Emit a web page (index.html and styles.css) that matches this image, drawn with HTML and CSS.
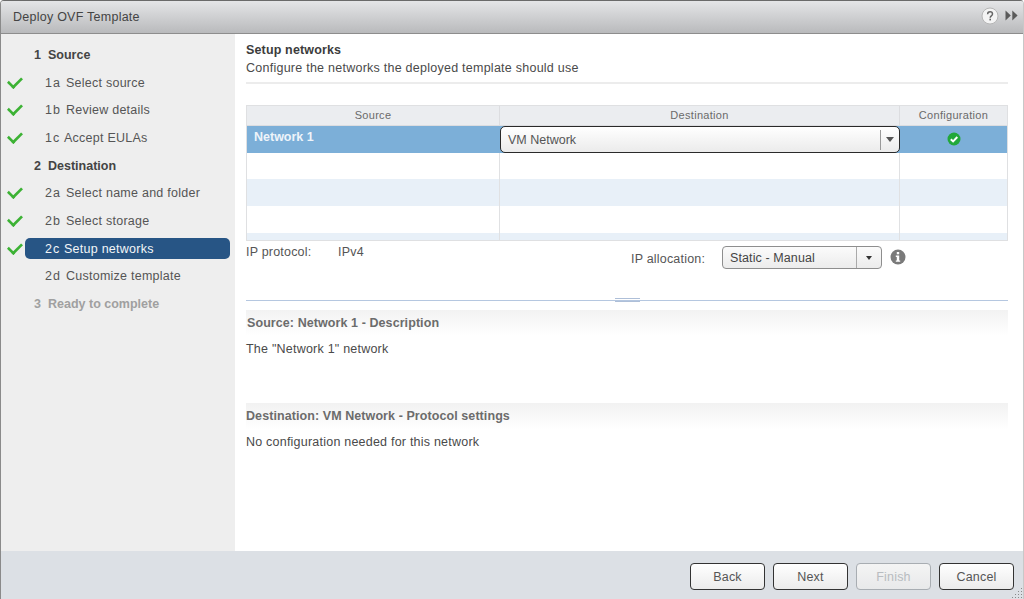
FILE: index.html
```html
<!DOCTYPE html>
<html lang="en">
<head>
<meta charset="utf-8">
<title>Deploy OVF Template</title>
<link rel="stylesheet" href="styles.css">
</head>
<body>
<div class="dialog">
  <header class="titlebar">
    <span class="title">Deploy OVF Template</span>
    <span class="title-icons">
      <svg class="help" width="18" height="18" viewBox="0 0 18 18"><circle cx="9" cy="9" r="8" fill="#f4f4f4" stroke="#b5b5b5"/><path d="M6.6 7.2c0-1.500 1.100-2.400 2.500-2.400s2.400.9 2.400 2.200c0 1.900-2.300 1.900-2.300 3.700" fill="none" stroke="#666" stroke-width="1.500"/><rect x="8.400" y="11.700" width="1.600" height="1.700" fill="#666"/></svg>
      <svg class="more" width="13" height="11" viewBox="0 0 13 11"><path d="M0.500 0.500L5.800 5.500L0.500 10.500ZM7.300 0.500L12.600 5.500L7.300 10.500Z" fill="#5a5a5a"/></svg>
    </span>
  </header>
  <div class="content">
    <nav class="steps">
      <div class="step head"><span class="num">1</span>Source</div>
      <div class="step sub done"><span class="num">1a</span>Select source</div>
      <div class="step sub done"><span class="num">1b</span>Review details</div>
      <div class="step sub done"><span class="num tight">1c</span>Accept EULAs</div>
      <div class="step head"><span class="num">2</span>Destination</div>
      <div class="step sub done"><span class="num">2a</span>Select name and folder</div>
      <div class="step sub done"><span class="num">2b</span>Select storage</div>
      <div class="step sub done current"><span class="pill"><span class="num">2c</span>Setup networks</span></div>
      <div class="step sub"><span class="num">2d</span>Customize template</div>
      <div class="step head muted"><span class="num">3</span>Ready to complete</div>
    </nav>
    <main class="main">
      <h1 class="page-title">Setup networks</h1>
      <p class="page-sub">Configure the networks the deployed template should use</p>
      <div class="rule"></div>
      <div class="table">
        <div class="th">Source</div><div class="th">Destination</div><div class="th">Configuration</div>
        <div class="td sel name">Network 1</div>
        <div class="td sel"><div class="combo"><span class="combo-text">VM Network</span><span class="combo-btn"><i class="arrow"></i></span></div></div>
        <div class="td sel ok"><svg width="14" height="14" viewBox="0 0 14 14"><circle cx="7" cy="7" r="6.500" fill="#22a83a"/><path d="M3.800 7.200L6.100 9.400L10.300 5" fill="none" stroke="#fff" stroke-width="2"/></svg></div>
        <div class="td"></div><div class="td"></div><div class="td"></div>
        <div class="td alt"></div><div class="td alt"></div><div class="td alt"></div>
        <div class="td"></div><div class="td"></div><div class="td"></div>
        <div class="td alt"></div><div class="td alt"></div><div class="td alt"></div>
      </div>
      <div class="ip-row">
        <div class="ip-proto"><span class="ip-label">IP protocol:</span><span>IPv4</span></div>
        <div class="ip-alloc">
          <span class="alloc-label">IP allocation:</span>
          <div class="select"><span class="select-text">Static - Manual</span><span class="select-btn"><i class="arrow small"></i></span></div>
          <svg class="info" width="16" height="16" viewBox="0 0 16 16"><circle cx="8" cy="8" r="7.500" fill="#7a7a7a"/><rect x="6.800" y="3" width="2.400" height="2.300" fill="#fff"/><path d="M5.800 6.600H9.200V11.500H10.200V12.800H5.800V11.500H6.800V7.900H5.800Z" fill="#fff"/></svg>
        </div>
      </div>
      <div class="splitter"><span class="grip"></span></div>
      <section class="detail first">
        <h2 class="detail-head">Source: Network 1 - Description</h2>
        <p class="detail-body">The "Network 1" network</p>
      </section>
      <section class="detail second">
        <h2 class="detail-head">Destination: VM Network - Protocol settings</h2>
        <p class="detail-body">No configuration needed for this network</p>
      </section>
    </main>
  </div>
  <footer class="footer">
    <button class="btn">Back</button>
    <button class="btn">Next</button>
    <button class="btn disabled">Finish</button>
    <button class="btn">Cancel</button>
    <svg class="resize" width="12" height="12" viewBox="0 0 12 12"><path d="M10.500 1V2M7.500 4V5M10.500 4V5M4.500 7V8M7.500 7V8M10.500 7V8M1.500 10V11M4.500 10V11M7.500 10V11M10.500 10V11" stroke="#8a8a8a" stroke-width="1" fill="none"/></svg>
  </footer>
</div>
</body>
</html>
```
FILE: styles.css
```css
* { box-sizing: border-box; }
html, body { margin: 0; height: 100%; background: #fff; }
body { font-family: "Liberation Sans", Arial, sans-serif; font-size: 12px; color: #4a4a4a; overflow: hidden; }
.dialog { width: 1024px; height: 599px; display: flex; flex-direction: column; border-left: 1px solid #8a8a8a; border-right: 1px solid #c8c8c8; border-top: 1px solid #6a6a6a; border-radius: 4px 4px 0 0; overflow: hidden; position: relative; }
.titlebar { height: 33px; flex: none; display: flex; align-items: center; justify-content: space-between; padding: 0 5px 0 12px; background: linear-gradient(#e4e5e7, #b9babc); border-bottom: 1px solid #8d8d8d; }
.title { font-size: 12.500px; color: #444; letter-spacing: .25px; }
.title-icons { display: flex; align-items: center; gap: 6px; margin-bottom: 3px; }
.content { flex: 1; display: flex; min-height: 0; }
.steps { width: 234px; flex: none; background: #eeeeee; padding-top: 7px; display: grid; grid-auto-rows: 27.700px; align-content: start; }
.step { display: flex; align-items: center; white-space: nowrap; letter-spacing: .25px; position: relative; font-size: 12.500px; }
.num { display: inline-block; letter-spacing: 1px; }
.head { font-weight: bold; padding-left: 33px; color: #444; letter-spacing: 0; }
.head .num { width: 14px; }
.muted, .muted .num { color: #a0a0a0; }
.sub { padding-left: 44px; color: #555; }
.sub .num { width: 21px; }
.sub .num.tight { width: 19px; }
.done::before { content: ""; position: absolute; left: 6px; top: 7px; width: 13px; height: 7px; border-left: 3px solid #3cb234; border-bottom: 3px solid #3cb234; transform: rotate(-45deg) scale(.85, .9); transform-origin: center; }
.current { padding-left: 24px; }
.pill { flex: 1; margin-right: 5px; height: 21px; display: flex; align-items: center; padding-left: 20px; background: #275585; border-radius: 5px; color: #f2f5f8; }
.pill .num { width: 19px; }
.main { flex: 1; min-width: 0; padding: 9px 16px 0 11px; background: #fff; }
.page-title { margin: 0; font-size: 12.500px; line-height: 15px; color: #3c3c3c; font-weight: bold; letter-spacing: .15px; }
.page-sub { margin: 3px 0 0; font-size: 12.500px; line-height: 15px; letter-spacing: .25px; color: #4a4a4a; white-space: nowrap; }
.rule { height: 2px; background: #ececec; margin-top: 6px; width: 762px; }
.table { margin-top: 21px; width: 762px; height: 136px; border: 1px solid #dfe0e2; display: grid; grid-template-columns: 253px 400px 1fr; grid-template-rows: 20px repeat(3, 26.700px) 26.700px 8px; overflow: hidden; }
.th { background: #ebedf0; color: #6a6a6a; font-size: 11px; letter-spacing: .3px; display: flex; align-items: center; justify-content: center; padding-bottom: 2px; border-right: 1px solid #dcdde0; border-bottom: 1px solid #dcdde0; }
.th:nth-child(3n) { border-right: 0; }
.td { border-right: 1px solid #e0e1e3; }
.td:nth-child(3n) { border-right: 0; }
.alt { background: #e8f0f8; }
.sel { background: #7cafd8; border-right: 0; }
.name { color: #eef4fa; font-weight: bold; font-size: 12.500px; padding: 4px 0 0 7px; }
.ok { display: flex; align-items: center; justify-content: center; }
.combo { height: 27px; border: 1px solid #2a2a2a; border-radius: 5px; display: flex; align-items: center; justify-content: space-between; background: linear-gradient(#ffffff, #ebebeb); }
.combo-text { padding-left: 7px; font-size: 12.500px; color: #555; }
.combo-btn { width: 19px; height: 20px; border-left: 1px solid #9a9a9a; display: flex; align-items: center; justify-content: center; }
.arrow { width: 0; height: 0; border-left: 4.500px solid transparent; border-right: 4.500px solid transparent; border-top: 5px solid #555; }
.arrow.small { border-left-width: 3px; border-right-width: 3px; border-top-width: 4px; border-top-color: #333; }
.ip-row { display: flex; margin-top: 4px; height: 55px; position: relative; }
.ip-proto { font-size: 12.500px; width: 385px; color: #555; letter-spacing: .2px; }
.ip-label { display: inline-block; width: 92px; }
.ip-alloc { display: flex; align-items: flex-start; }
.alloc-label { font-size: 12.500px; color: #555; width: 91px; padding-top: 7px; letter-spacing: .2px; white-space: nowrap; }
.select { width: 160px; height: 23px; margin-top: 1px; border: 1px solid #8e8e8e; border-radius: 4px; display: flex; align-items: center; justify-content: space-between; background: linear-gradient(#fbfbfb, #ececec); }
.select-text { padding-left: 7px; font-size: 12.500px; color: #444; letter-spacing: .1px; }
.select-btn { width: 25px; height: 100%; border-left: 1px solid #aaa; display: flex; align-items: center; justify-content: center; }
.info { margin: 4px 0 0 8px; }
.splitter { height: 1px; background: #b5c7e0; width: 762px; position: relative; }
.grip { position: absolute; left: 369px; top: -2px; width: 25px; height: 4px; border-top: 1px solid #aebfd8; border-bottom: 1px solid #aebfd8; }
.detail { width: 762px; }
.first { margin-top: 9px; height: 93px; }
.second { height: 60px; }
.detail-head { margin: 0; height: 26px; padding: 6px 0 0 1px; font-size: 12.500px; line-height: 15px; color: #6c6c6c; font-weight: bold; letter-spacing: .08px; background: linear-gradient(#f2f2f2, #ffffff); }
.second .detail-head { padding-left: 0; }
.detail-body { margin: 6px 0 0; font-size: 12.500px; line-height: 15px; color: #4a4a4a; letter-spacing: .22px; }
.footer { height: 48px; flex: none; background: #dce0e5; display: flex; justify-content: flex-end; align-items: flex-start; gap: 8px; padding: 12px 9px 0 0; position: relative; }
.btn { width: 75px; height: 27px; padding: 0; font: 12.500px "Liberation Sans", Arial, sans-serif; letter-spacing: .2px; color: #555; border: 1px solid #333; border-radius: 4px; background: linear-gradient(#ffffff, #ebebeb); }
.btn.disabled { color: #b8bcc0; border-color: #a8adb2; background: linear-gradient(#f4f4f4, #e8e9ea); }
.resize { position: absolute; right: 0; bottom: 0; }
```
